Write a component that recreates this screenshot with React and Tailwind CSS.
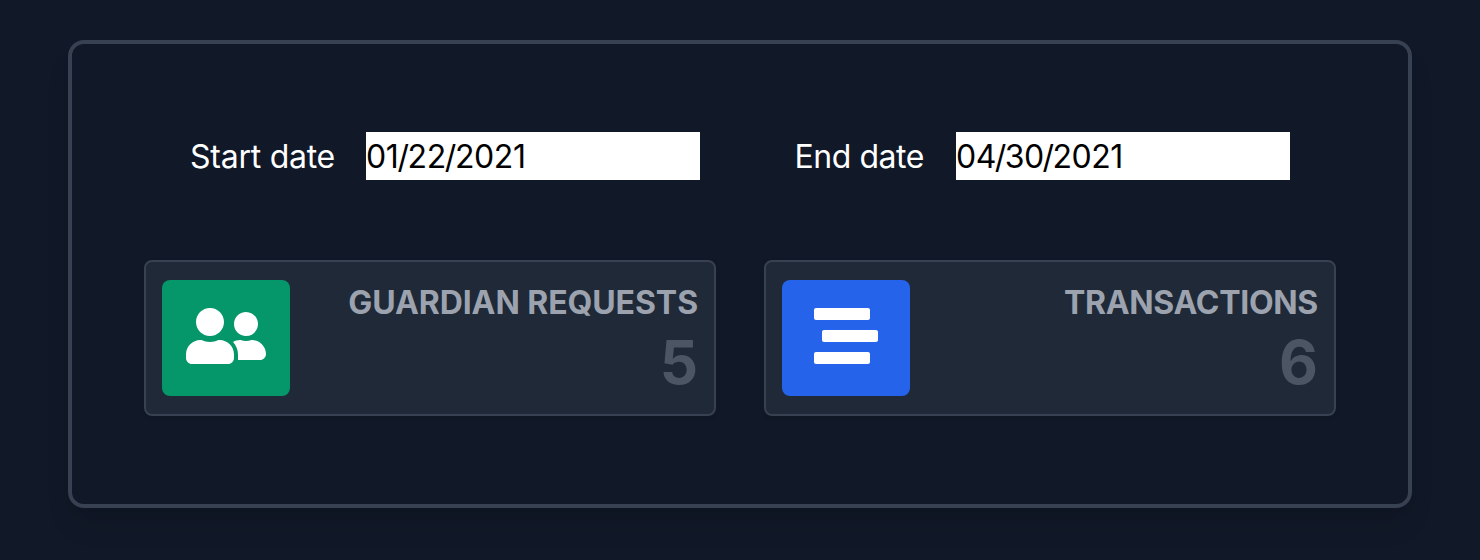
import { FaUserFriends, FaStream } from "react-icons/fa";

function DateField({ label, parts, labelClass, dateClass }) {
  const [month, day, year] = parts;
  return (
    <div className="flex items-center">
      <span className={`pt-0.5 text-[32px] leading-[48px] whitespace-nowrap text-white ${labelClass}`}>{label}</span>
      <span className={`block h-12 w-[334px] bg-white pt-px text-[32px] leading-[48px] text-black ${dateClass}`}>
        {month}
        <span className="-mx-px">/</span>
        {day}
        <span className="-mx-px">/</span>
        {year}
      </span>
    </div>
  );
}

function StatCard({ title, titleClass, value, tile, children }) {
  return (
    <div className="flex h-[156px] w-[572px] items-center rounded-lg border-2 border-[#374151] bg-[#1f2937] px-4 shadow-[0_2px_4px_rgba(0,0,0,0.1)]">
      <div className={`flex h-[116px] w-32 shrink-0 items-start justify-center rounded-lg pt-6 text-white ${tile}`}>
        {children}
      </div>
      <div className="flex flex-1 flex-col pt-0.5 pb-px text-right font-bold">
        <h5 className={`text-[32px] leading-[48px] text-[#9ca3af] uppercase ${titleClass}`}>{title}</h5>
        <h3 className="-mt-px text-[60px] leading-[72px] text-[#4b5563]">{value}</h3>
      </div>
    </div>
  );
}

export default function App() {
  return (
    <div className="h-[560px] w-[1480px] overflow-hidden bg-[#111827] px-[68px] pt-10 font-['Inter',sans-serif]">
      <div className="h-[468px] w-[1344px] rounded-2xl border-4 border-[#374151] px-[72px] pt-[88px] shadow-[0_20px_30px_-6px_rgba(0,0,0,0.1),0_8px_12px_-4px_rgba(0,0,0,0.05)]">
        <div className="flex h-12 items-center justify-between px-[46px]">
          <DateField label="Start date" parts={["01", "22", "2021"]} labelClass="w-44 tracking-[-0.25px]" dateClass="tracking-[-0.4px]" />
          <DateField label="End date" parts={["04", "30", "2021"]} labelClass="mr-8 tracking-[-0.45px]" dateClass="tracking-[-0.55px]" />
        </div>
        <div className="mt-20 flex gap-12">
          <StatCard title="Guardian Requests" titleClass="tracking-[-0.08px]" value="5" tile="bg-[#059669]">
            <FaUserFriends className="h-16 w-20" />
          </StatCard>
          <StatCard title="Transactions" titleClass="tracking-[-0.3px]" value="6" tile="bg-[#2563eb]">
            <FaStream className="h-16 w-16" />
          </StatCard>
        </div>
      </div>
    </div>
  );
}
